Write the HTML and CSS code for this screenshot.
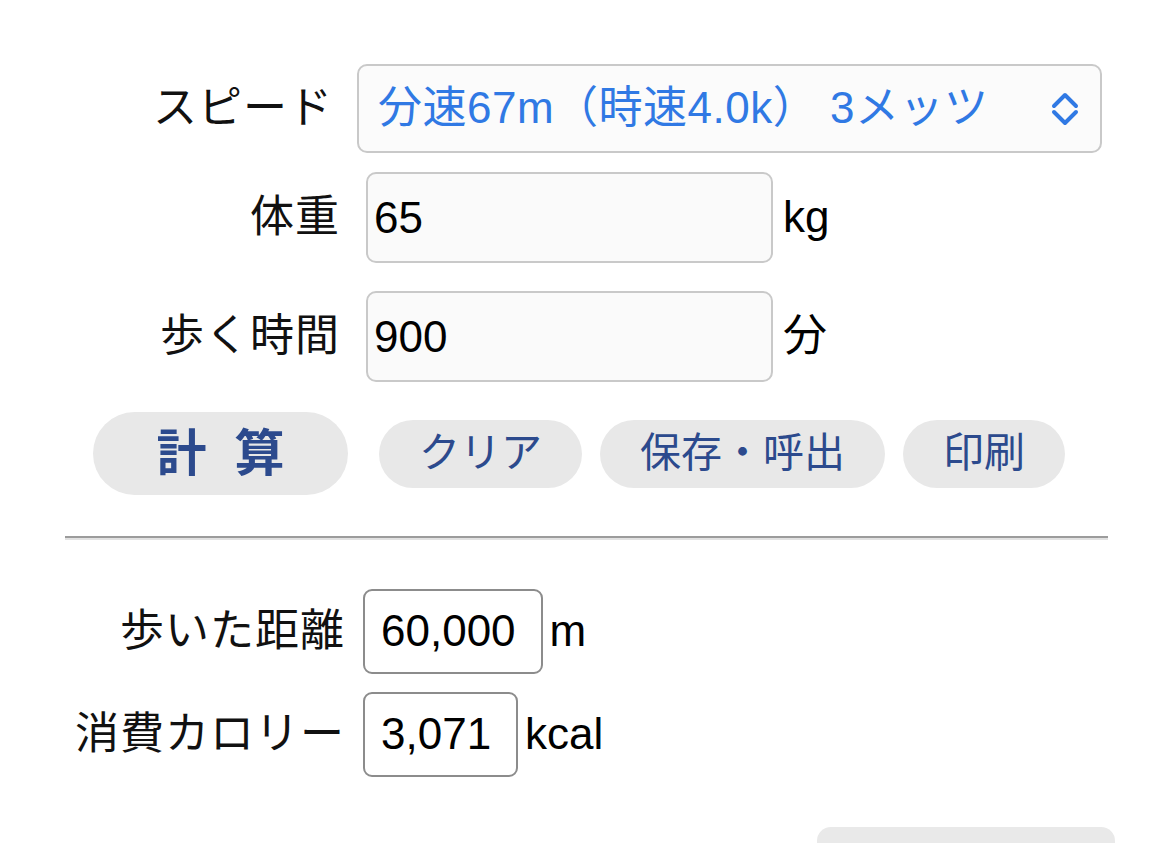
FILE: index.html
```html
<!DOCTYPE html>
<html lang="ja">
<head>
  <meta charset="UTF-8" />
  <meta name="viewport" content="width=device-width, initial-scale=1.0" />
  <title>歩く距離と消費カロリー</title>
  <link rel="stylesheet" href="styles.css">
</head>
<body>
  <div class="page">
    <div class="form">
      <div class="row row-speed">
        <label class="label">スピード</label>
        <div class="select">
          <span class="select-text">分速67m（時速4.0k）&nbsp;3メッツ</span>
          <svg class="chevron" width="30" height="36" viewBox="0 0 30 36">
            <path d="M4 15 L15 4 L26 15" />
            <path d="M4 21 L15 32 L26 21" />
          </svg>
        </div>
      </div>
      <div class="row row-input">
        <label class="label">体重</label>
        <input class="field" type="text" value="65">
        <span class="unit">kg</span>
      </div>
      <div class="row row-input row-time">
        <label class="label">歩く時間</label>
        <input class="field" type="text" value="900">
        <span class="unit">分</span>
      </div>
    </div>

    <div class="buttons">
      <button class="btn btn-main">計算</button>
      <button class="btn">クリア</button>
      <button class="btn">保存・呼出</button>
      <button class="btn">印刷</button>
    </div>

    <div class="divider"></div>

    <div class="results">
      <div class="row">
        <span class="label">歩いた距離</span>
        <span class="result">60,000</span>
        <span class="unit">m</span>
      </div>
      <div class="row row-kcal">
        <span class="label">消費カロリー</span>
        <span class="result">3,071</span>
        <span class="unit">kcal</span>
      </div>
    </div>

    <div class="bottom">
      <div class="bottom-bar"></div>
    </div>
  </div>
</body>
</html>
```

FILE: styles.css
```css
body { margin: 0; background: #fff; color: #111; font-family: "Liberation Sans", "Noto Sans CJK JP", sans-serif; font-size: 44px; line-height: 1.2; overflow: hidden }
.page { width: 1170px; height: 843px; padding-top: 64px; box-sizing: border-box }

/* 入力 */
.form { display: flex; flex-direction: column }
.row { display: flex; align-items: center }
.label { width: 340px; text-align: right; flex: none; white-space: nowrap; letter-spacing: 1px }
.row-speed .label { width: 333px; letter-spacing: 1px }
.select { display: flex; align-items: center; justify-content: space-between; box-sizing: border-box; width: 745px; height: 89px; margin-left: 24px; padding: 0 20px 0 19px; border: 2px solid #c9c9c9; border-radius: 10px; background: #fbfbfb; color: #3079e4; font-size: 44px }
.select-text { letter-spacing: 0.5px }
.chevron { flex: none }
.chevron path { fill: none; stroke: #3079e4; stroke-width: 4; stroke-linecap: round; stroke-linejoin: round }
.row-input { margin-top: 19px }
.row-time { margin-top: 28px }
.field { box-sizing: border-box; width: 407px; height: 91px; margin: 0 0 0 26px; padding: 0 6px; border: 2px solid #c9c9c9; border-radius: 10px; background: #fafafa; font: inherit; color: #000; outline: none }
.unit { margin-left: 10px; color: #000 }

/* ボタン */
.buttons { display: flex; align-items: center; margin-top: 30px; padding-left: 93px }
.btn { height: 68px; padding: 0 40px; margin-right: 18px; border: none; border-radius: 34px; background: #e8e8e8; color: #2c4a8d; font-family: "Liberation Sans", "Noto Sans CJK JP", sans-serif; font-size: 41px; line-height: 1 }
.btn-main { width: 255px; height: 83px; border-radius: 42px; margin-right: 31px; padding: 0 0 0 28px; font-size: 50px; font-weight: bold; letter-spacing: 28px }

.divider { margin: 41px 0 0 65px; width: 1043px; height: 0; border-top: 2px solid #9c9c9c; border-bottom: 2px solid #e2e2e2 }

/* 結果 */
.results { margin-top: 49px }
.results .label { width: 345px }
.results .row-kcal { margin-top: 18px }
.result { box-sizing: border-box; height: 85px; margin-left: 18px; padding: 0 25px 0 16px; display: flex; align-items: center; border: 2px solid #8c8c8c; border-radius: 9px; color: #000 }
.results .unit { margin-left: 7px }

.bottom { display: flex; justify-content: flex-end; margin-top: 50px; padding-right: 55px }
.bottom-bar { width: 298px; height: 40px; background: #e9e9e9; border-radius: 14px 14px 0 0 }
```
